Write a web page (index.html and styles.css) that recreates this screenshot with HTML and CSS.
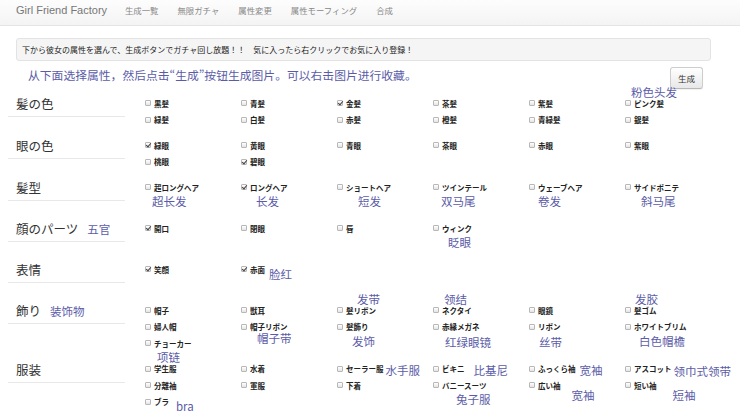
FILE: index.html
```html
<!DOCTYPE html>
<html lang="ja">
<head>
<meta charset="utf-8">
<title>Girl Friend Factory</title>
<link rel="stylesheet" href="styles.css">
</head>
<body>
<header class="navbar">
  <a class="brand">Girl Friend Factory</a>
  <nav class="nav">
    <a>生成一覧</a><a>無限ガチャ</a><a>属性変更</a><a>属性モーフィング</a><a>合成</a>
  </nav>
</header>
<main class="page">
  <div class="alert">下から彼女の属性を選んで、生成ボタンでガチャ回し放題！！　気に入ったら右クリックでお気に入り登録！</div>
  <div class="intro">
    <p class="note">从下面选择属性，然后点击“生成”按钮生成图片。可以右击图片进行收藏。</p>
    <button class="btn">生成</button>
  </div>

  <section class="group">
    <h3 class="label">髪の色</h3>
    <div class="opts">
      <label class="opt"><span class="cb"></span>黒髪</label>
      <label class="opt"><span class="cb"></span>青髪</label>
      <label class="opt"><span class="cb on"></span>金髪</label>
      <label class="opt"><span class="cb"></span>茶髪</label>
      <label class="opt"><span class="cb"></span>紫髪</label>
      <label class="opt"><span class="cb"></span>ピンク髪<span class="zh up l6">粉色头发</span></label>
      <label class="opt"><span class="cb"></span>緑髪</label>
      <label class="opt"><span class="cb"></span>白髪</label>
      <label class="opt"><span class="cb"></span>赤髪</label>
      <label class="opt"><span class="cb"></span>橙髪</label>
      <label class="opt"><span class="cb"></span>青緑髪</label>
      <label class="opt"><span class="cb"></span>銀髪</label>
    </div>
  </section>

  <section class="group">
    <h3 class="label">眼の色</h3>
    <div class="opts">
      <label class="opt"><span class="cb on"></span>緑眼</label>
      <label class="opt"><span class="cb"></span>黄眼</label>
      <label class="opt"><span class="cb"></span>青眼</label>
      <label class="opt"><span class="cb"></span>茶眼</label>
      <label class="opt"><span class="cb"></span>赤眼</label>
      <label class="opt"><span class="cb"></span>紫眼</label>
      <label class="opt"><span class="cb"></span>桃眼</label>
      <label class="opt"><span class="cb on"></span>碧眼</label>
    </div>
  </section>

  <section class="group">
    <h3 class="label">髪型</h3>
    <div class="opts">
      <label class="opt"><span class="cb"></span>超ロングヘア<span class="zh down l7">超长发</span></label>
      <label class="opt"><span class="cb on"></span>ロングヘア<span class="zh down l15">长发</span></label>
      <label class="opt"><span class="cb"></span>ショートヘア<span class="zh down l21">短发</span></label>
      <label class="opt"><span class="cb"></span>ツインテール<span class="zh down l8">双马尾</span></label>
      <label class="opt"><span class="cb"></span>ウェーブヘア<span class="zh down l9">卷发</span></label>
      <label class="opt"><span class="cb"></span>サイドポニテ<span class="zh down l16">斜马尾</span></label>
    </div>
  </section>

  <section class="group">
    <h3 class="label">顔のパーツ<span class="zh side">五官</span></h3>
    <div class="opts">
      <label class="opt"><span class="cb on"></span>開口</label>
      <label class="opt"><span class="cb"></span>閉眼</label>
      <label class="opt"><span class="cb"></span>唇</label>
      <label class="opt"><span class="cb"></span>ウィンク<span class="zh down l15">眨眼</span></label>
    </div>
  </section>

  <section class="group">
    <h3 class="label">表情</h3>
    <div class="opts">
      <label class="opt"><span class="cb on"></span>笑顔</label>
      <label class="opt"><span class="cb on"></span>赤面<span class="zh inl g4 d5">脸红</span></label>
    </div>
  </section>

  <section class="group">
    <h3 class="label">飾り<span class="zh side">装饰物</span></h3>
    <div class="opts">
      <label class="opt"><span class="cb"></span>帽子</label>
      <label class="opt"><span class="cb"></span>獣耳</label>
      <label class="opt"><span class="cb"></span>髪リボン<span class="zh up l20">发带</span></label>
      <label class="opt"><span class="cb"></span>ネクタイ<span class="zh up l11">领结</span></label>
      <label class="opt"><span class="cb"></span>眼鏡</label>
      <label class="opt"><span class="cb"></span>髪ゴム<span class="zh up l10">发胶</span></label>
      <label class="opt"><span class="cb"></span>婦人帽</label>
      <label class="opt"><span class="cb"></span>帽子リボン<span class="zh down-s l16">帽子带</span></label>
      <label class="opt"><span class="cb"></span>髪飾り<span class="zh down l15">发饰</span></label>
      <label class="opt"><span class="cb"></span>赤縁メガネ<span class="zh down-l l12">红绿眼镜</span></label>
      <label class="opt"><span class="cb"></span>リボン<span class="zh down-l l10">丝带</span></label>
      <label class="opt"><span class="cb"></span>ホワイトブリム<span class="zh down l14">白色帽檐</span></label>
      <label class="opt"><span class="cb"></span>チョーカー<span class="zh down l12">项链</span></label>
    </div>
  </section>

  <section class="group">
    <h3 class="label">服装</h3>
    <div class="opts">
      <label class="opt"><span class="cb"></span>学生服</label>
      <label class="opt"><span class="cb"></span>水着</label>
      <label class="opt"><span class="cb"></span>セーラー服<span class="zh inl g2 d1">水手服</span></label>
      <label class="opt"><span class="cb"></span>ビキニ<span class="zh inl g9 d1">比基尼</span></label>
      <label class="opt"><span class="cb"></span>ふっくら袖<span class="zh inl g4 d1">宽袖</span></label>
      <label class="opt"><span class="cb"></span>アスコット<span class="zh inl g2 d2">领巾式领带</span></label>
      <label class="opt"><span class="cb"></span>分離袖</label>
      <label class="opt"><span class="cb"></span>軍服</label>
      <label class="opt"><span class="cb"></span>下着</label>
      <label class="opt"><span class="cb"></span>バニースーツ<span class="zh down l23">兔子服</span></label>
      <label class="opt"><span class="cb"></span>広い袖<span class="zh inl g11 d10">宽袖</span></label>
      <label class="opt"><span class="cb"></span>短い袖<span class="zh inl g16 d10">短袖</span></label>
      <label class="opt"><span class="cb"></span>ブラ<span class="zh inl g7 d4">bra</span></label>
    </div>
  </section>
</main>
</body>
</html>
```

FILE: styles.css
```css
* {
  box-sizing: border-box;
  margin: 0;
  padding: 0;
}

body {
  width: 740px;
  overflow: hidden;
  background: #fff;
  color: #333;
  font-family: "Noto Sans CJK JP", "Noto Sans CJK SC", sans-serif;
}

/* ---------- navbar ---------- */
.navbar {
  display: flex;
  align-items: flex-start;
  height: 26px;
  padding-left: 16px;
  background: linear-gradient(#fdfdfd, #f4f4f4);
  border-bottom: 1px solid #e4e4e4;
}

.brand {
  width: 109px;
  flex: none;
  font-family: "Liberation Sans", Arial, sans-serif;
  font-size: 11px;
  line-height: 20px;
  color: #777;
  white-space: nowrap;
}

.nav {
  display: flex;
  gap: 19px;
}

.nav a {
  font-size: 8.4px;
  line-height: 20px;
  color: #888;
  white-space: nowrap;
}

/* ---------- page ---------- */
.page {
  padding: 12px 0 0 8px;
}

.alert {
  width: 695px;
  height: 23px;
  margin-left: 8px;
  padding-left: 5px;
  background: #f5f5f5;
  border: 1px solid #e3e3e3;
  border-radius: 3px;
  font-size: 8px;
  line-height: 21px;
  color: #222;
  white-space: nowrap;
}

.intro {
  display: flex;
  justify-content: space-between;
  align-items: flex-start;
  width: 695px;
  margin: 6px 0 5px;
  padding-left: 20px;
}

.note {
  font-family: "Noto Sans CJK SC", sans-serif;
  font-size: 11.8px;
  line-height: 16px;
  color: #5b5ca8;
  white-space: nowrap;
}

.btn {
  width: 33px;
  height: 22px;
  border: 1px solid #cdcdcd;
  border-bottom-color: #b8b8b8;
  border-radius: 3px;
  background: linear-gradient(#ffffff, #e8e8e8);
  box-shadow: 0 1px 1px rgba(0, 0, 0, 0.06);
  font-family: "Noto Sans CJK JP", sans-serif;
  font-size: 8.5px;
  color: #333;
}

/* ---------- attribute groups ---------- */
.group {
  display: flex;
  min-height: 41px;
}

.label {
  flex: none;
  align-self: flex-start;
  width: 117px;
  padding: 0 0 2px 8px;
  border-bottom: 1px solid #e8e8e8;
  font-size: 12.5px;
  font-weight: 400;
  line-height: 20px;
  color: #333;
  white-space: nowrap;
}

.opts {
  display: grid;
  grid-template-columns: repeat(6, 96px);
  grid-auto-rows: 16.5px;
  align-content: start;
  margin-left: 20px;
  padding: 1px 0 8px;
}

.opt {
  position: relative;
  display: flex;
  align-items: center;
  font-size: 7.5px;
  font-weight: 700;
  color: #222;
  white-space: nowrap;
}

.cb {
  position: relative;
  flex: none;
  width: 6px;
  height: 6px;
  margin-right: 3px;
  border: 1px solid #b7b7b7;
  border-radius: 1px;
  background: linear-gradient(#ffffff, #e4e4e4);
}

.cb.on::after {
  content: "";
  position: absolute;
  left: 1px;
  top: -1px;
  width: 2px;
  height: 4px;
  border: solid #444;
  border-width: 0 1px 1px 0;
  transform: rotate(40deg);
}

/* ---------- chinese translation notes ---------- */
.zh {
  font-family: "Noto Sans CJK SC", sans-serif;
  font-size: 11.5px;
  font-weight: 400;
  line-height: 12px;
  color: #5b5ca8;
  white-space: nowrap;
}

.side {
  margin-left: 9px;
}

.up,
.down,
.down-s,
.down-l {
  position: absolute;
}

.up { top: -9px; }
.down { top: 16px; }
.down-s { top: 13px; }
.down-l { top: 17px; }

.l6 { left: 6px; }
.l7 { left: 7px; }
.l8 { left: 8px; }
.l9 { left: 9px; }
.l10 { left: 10px; }
.l11 { left: 11px; }
.l12 { left: 12px; }
.l14 { left: 14px; }
.l15 { left: 15px; }
.l16 { left: 16px; }
.l20 { left: 20px; }
.l21 { left: 21px; }
.l23 { left: 23px; }

.inl {
  position: relative;
}

.g2 { margin-left: 2px; }
.g4 { margin-left: 4px; }
.g7 { margin-left: 7px; }
.g9 { margin-left: 9px; }
.g11 { margin-left: 11px; }
.g16 { margin-left: 16px; }

.d1 { top: 1px; }
.d2 { top: 2px; }
.d4 { top: 4px; }
.d5 { top: 5px; }
.d10 { top: 10px; }
```
